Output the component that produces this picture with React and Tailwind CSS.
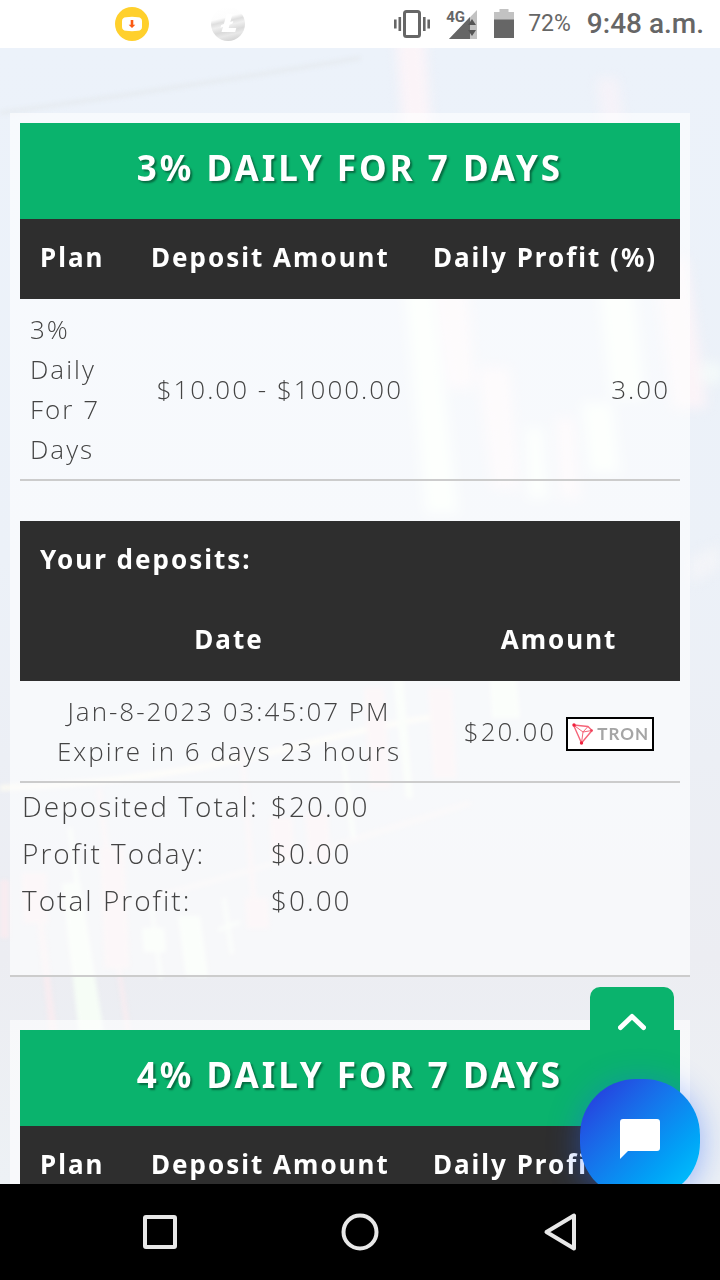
function Backdrop() {
  return (
    <svg
      className="absolute inset-0 h-full w-full"
      viewBox="0 0 720 1136"
      preserveAspectRatio="xMidYMin slice"
      aria-hidden="true"
    >
      <defs>
        <linearGradient id="sky" x1="0" y1="0" x2="0" y2="1">
          <stop offset="0" stopColor="#ecf2fa" />
          <stop offset="0.45" stopColor="#ecf1f8" />
          <stop offset="0.8" stopColor="#ecedf2" />
          <stop offset="1" stopColor="#edf1f5" />
        </linearGradient>
        <filter id="far" colorInterpolationFilters="sRGB">
          <feGaussianBlur stdDeviation="6" />
        </filter>
        <filter id="near" colorInterpolationFilters="sRGB">
          <feGaussianBlur stdDeviation="2" />
        </filter>
      </defs>
      <rect width="720" height="1136" fill="url(#sky)" />
      <path d="M0 65 Q180 40 360 10" stroke="#e6ebf0" strokeWidth="4" fill="none" filter="url(#near)" />

      {/* blurred candles, top right */}
      <g filter="url(#far)">
        <g fill="#fbf4f8">
          <path d="M395 -20h29l13 180h-28z" />
          <path d="M596 30h22l8 60h-22z" opacity="0.6" />
          <path d="M430 200h34l10 140h-26z" />
          <path d="M479 320h30l10 120h-26z" />
          <path d="M655 210h32l20 150h-34z" />
          <path d="M556 370h18l6 80h-20z" />
        </g>
        <g fill="#f9fffa">
          <path d="M402 215h28l28 250h-32z" />
          <path d="M595 200h34l16 150h-34z" />
          <path d="M582 355h30l8 70h-30z" />
          <path d="M526 380h16l6 70h-20z" />
          <circle cx="712" cy="325" r="12" opacity="0.6" />
        </g>
        <path d="M690 510l30-14v24l-30 16z" fill="#f3f4f8" />
      </g>

      {/* moving averages and sharper candles, bottom left */}
      <g filter="url(#near)">
        <path d="M0 740 Q150 735 290 700 T440 670" stroke="#fbfaf2" strokeWidth="6" fill="none" />
        <path d="M150 850 Q300 810 470 755" stroke="#f6f0f2" strokeWidth="4" fill="none" />
        <g fill="#f8ecf0">
          <path d="M0 832h9v58h-9z" />
          <path d="M22 825h24l2 50h-24z" />
          <path d="M38 875h5l16 125h-8z" />
          <path d="M100 800h24l5 120h-24z" />
          <path d="M97 740h4l10 80h-5z" />
          <path d="M116 915h4l13 85h-5z" />
          <path d="M245 850h22l2 30h-22z" />
          <path d="M240 700h4l12 150h-5z" />
          <path d="M270 770h22l2 40h-22z" />
          <path d="M305 765h22l4 50h-22z" />
          <path d="M364 640h20l6 100h-20z" />
          <path d="M428 640h24l4 90h-22z" />
        </g>
        <g fill="#f6fdf6">
          <path d="M62 835h18l24 150h-25z" />
          <path d="M68 780h4l8 60h-5z" />
          <path d="M142 880h22l2 24h-22z" />
          <path d="M150 860h3l10 70h-4z" />
          <path d="M178 868h22l8 60h-22z" />
          <path d="M222 850h4l8 56h-4z" />
          <path d="M218 880l22-8v4l-22 8z" />
          <path d="M340 700h4l12 90h-5z" />
          <path d="M393 630h10l10 120h-7z" />
          <path d="M490 630h26l4 40h-28z" />
        </g>
      </g>
    </svg>
  );
}

function StatusBar() {
  return (
    <header className="flex h-12 shrink-0 items-center justify-between bg-white pr-4 pl-[115px] font-['Roboto',sans-serif] text-[#666]">
      <div className="flex items-center gap-[62px]">
        <svg className="h-[34px] w-[34px]" viewBox="0 0 34 34">
          <circle cx="17" cy="17" r="17" fill="#ffd02c" />
          <path d="M11 10.2q6-.8 12 0 4 .3 4 4v5.600q0 3.700-4 4-6 .8-12 0-4-.3-4-4v-5.600q0-3.700 4-4z" fill="#fff" />
          <path d="M15.700 13h2.600v4.800h2L17 21l-3.300-3.200h2z" fill="#fb5a12" />
        </svg>
        <svg className="h-[34px] w-[34px]" viewBox="0 0 34 34">
          <defs>
            <linearGradient id="silver" x1="0.35" y1="0" x2="0.6" y2="1">
              <stop offset="0" stopColor="#fff" />
              <stop offset="0.3" stopColor="#fdfdfd" />
              <stop offset="0.42" stopColor="#dedede" />
              <stop offset="0.54" stopColor="#efefef" />
              <stop offset="0.7" stopColor="#dadada" />
              <stop offset="0.82" stopColor="#e8e8e8" />
              <stop offset="1" stopColor="#d2d2d2" />
            </linearGradient>
          </defs>
          <circle cx="17" cy="17" r="17" fill="url(#silver)" />
          <path d="M15.500 7h6l-2.200 8 3-1.100-.7 2.700-3 1.200-.9 3.200h7.600L24.200 25H10.500l1.600-5.200-2.700 1 .8-2.700 2.700-1z" fill="#fff" />
        </svg>
      </div>

      <div className="flex items-center">
        <svg className="mr-4 h-7 w-9" viewBox="0 0 36 28" fill="#666">
          <rect x="10.500" y="1.500" width="15" height="25" rx="2" fill="none" stroke="#666" strokeWidth="3" />
          <path d="M0 9.500h2.600v9H0zM4.500 7h2.600v14H4.500zM29 7h2.600v14H29zM33.400 9.500H36v9h-2.600z" />
        </svg>
        <div className="relative mr-4 h-[30px] w-8">
          <svg className="h-full w-full" viewBox="0 0 32 30">
            <path d="M31 1v29H3z" fill="#c2c2c2" />
            <path d="M24 8v22H3z" fill="#666" />
            <path d="M26 10l4 6h-8zM26 27l4-6h-8z" fill="#555" />
          </svg>
          <span className="absolute top-0 left-0 text-[15px] leading-4 font-bold">4G</span>
        </div>
        <svg className="mr-[14px] h-[30px] w-5" viewBox="0 0 20 30">
          <path d="M5.500 0h9v3H20v9H0V3h5.500z" fill="#c2c2c2" />
          <path d="M0 10.500h20V29H0z" fill="#666" />
        </svg>
        <span className="mr-4 text-[23px]">72%</span>
        <span className="text-[28px] leading-8 font-medium">9:48 a.m.</span>
      </div>
    </header>
  );
}

function TronBadge() {
  return (
    <span className="flex h-[34px] w-[88px] items-center gap-1 border-2 border-black bg-white pl-1">
      <svg className="h-[22px] w-[21px]" viewBox="0 0 21 22" fill="none" stroke="#f56478" strokeLinejoin="round">
        <path d="M1.500 2L16 3.500l4 4L9.500 20z" strokeWidth="1.400" />
        <path d="M1.500 2L11 9l5-5.500M11 9l9-1.500M11 9L9.500 20" strokeWidth="1" />
        <circle cx="2" cy="2" r="1.700" fill="#f0203c" stroke="none" />
        <circle cx="9.500" cy="20" r="1.700" fill="#f0203c" stroke="none" />
        <circle cx="19.500" cy="7.500" r="1.300" fill="#f0405a" stroke="none" />
      </svg>
      <span className="font-['Lato',sans-serif] text-[17px] leading-5 font-bold tracking-[1px] text-[#a5a5a5]">TRON</span>
    </span>
  );
}

const heading = "bg-[#2e2e2e] font-['Noto_Sans',sans-serif] text-[26px] text-white";

function PlanTable({ title, rows = [] }) {
  return (
    <table className="w-full table-fixed">
      <colgroup>
        <col className="w-[111px]" />
        <col />
        <col className="w-[267px]" />
      </colgroup>
      <thead>
        <tr className="bg-[#0ab36d] font-['Noto_Sans',sans-serif] text-[35px] tracking-[3px] text-white">
          <th colSpan={3} className="h-24 pb-[6px] font-bold [text-shadow:2px_2px_2px_rgba(0,0,0,0.4)]">
            {title}
          </th>
        </tr>
        <tr className={heading}>
          <th className="h-20 pb-1 pl-5 text-left font-bold">Plan</th>
          <th className="pb-1 pl-5 text-left font-bold">Deposit Amount</th>
          <th className="pb-1 pl-5 text-left font-bold whitespace-nowrap">Daily Profit (%)</th>
        </tr>
      </thead>
      <tbody>
        {rows.map((row) => (
          <tr key={row.plan} className="border-b-2 border-[#ccc]">
            <td className="p-[10px]">{row.plan}</td>
            <td className="p-[10px] text-right whitespace-nowrap">{row.amount}</td>
            <td className="p-[10px] text-right">{row.profit}</td>
          </tr>
        ))}
      </tbody>
    </table>
  );
}

function Deposits() {
  return (
    <table className="mt-10 w-full table-fixed text-center">
      <colgroup>
        <col />
        <col className="w-[242px]" />
      </colgroup>
      <thead className={heading}>
        <tr>
          <th colSpan={2} className="h-20 pb-1 pl-5 text-left font-bold">Your deposits:</th>
        </tr>
        <tr>
          <th className="h-20 pb-1 font-bold">Date</th>
          <th className="pb-1 font-bold">Amount</th>
        </tr>
      </thead>
      <tbody>
        <tr className="border-b-2 border-[#ccc]">
          <td className="py-[10px]">
            Jan-8-2023 03:45:07 PM
            <br />
            Expire in 6 days 23 hours
          </td>
          <td className="py-[10px]">
            <div className="flex items-end justify-center gap-[10px]">
              $20.00 <TronBadge />
            </div>
          </td>
        </tr>
      </tbody>
    </table>
  );
}

const totals = [
  ["Deposited Total:", "$20.00"],
  ["Profit Today:", "$0.00"],
  ["Total Profit:", "$0.00"],
];

export default function App() {
  return (
    <div className="flex h-screen flex-col overflow-hidden">
      <StatusBar />

      <main className="relative flex-1 overflow-hidden font-['Open_Sans',sans-serif] text-[26px] leading-10 font-light tracking-[2px] text-[#444]">
        <Backdrop />

        <div className="relative flex flex-col gap-[43px] pt-[65px] pr-[30px] pl-[10px]">
          <section className="border-b-2 border-[#ccc] bg-white/60 px-[10px] pt-[10px] pb-[51px]">
            <PlanTable
              title="3% DAILY FOR 7 DAYS"
              rows={[{ plan: "3% Daily For 7 Days", amount: "$10.00 - $1000.00", profit: "3.00" }]}
            />
            <Deposits />
            <table className="text-[28px] leading-[47px]">
              <tbody>
                {totals.map(([label, value]) => (
                  <tr key={label}>
                    <td className="w-[251px] pl-[2px]">{label}</td>
                    <td>{value}</td>
                  </tr>
                ))}
              </tbody>
            </table>
          </section>

          <section className="bg-white/60 px-[10px] pt-[10px]">
            <PlanTable title="4% DAILY FOR 7 DAYS" />
          </section>
        </div>

        <button
          aria-label="Back to top"
          className="absolute right-[46px] bottom-[113px] flex h-[84px] w-[84px] justify-center rounded-[10px] bg-[#0ab36d] pt-[26px]"
        >
          <svg className="h-[18px] w-7" viewBox="0 0 28 18" fill="none" stroke="#fff" strokeWidth="5" strokeLinecap="round" strokeLinejoin="round">
            <path d="M2.500 14.500L14 3.500l11.500 11" />
          </svg>
        </button>

        <button
          aria-label="Open chat"
          className="absolute right-5 -bottom-[15px] flex h-[120px] w-[120px] items-center justify-center rounded-[56px] bg-linear-to-br from-[#2a27da] to-[#00ccff] shadow-[0_4px_32px_rgba(35,100,255,0.45)]"
        >
          <svg className="h-10 w-10" viewBox="0 0 40 40" fill="#fff">
            <path d="M3 0h34q3 0 3 3v26q0 3-3 3H8l-8 8V3q0-3 3-3z" />
          </svg>
        </button>
      </main>

      <nav className="flex h-24 shrink-0 items-center justify-around bg-black px-[60px]">
        <button aria-label="Recent apps">
          <svg className="h-10 w-10" viewBox="0 0 40 40" fill="none" stroke="#e8e8e8" strokeWidth="4">
            <rect x="5" y="5" width="30" height="30" rx="1" />
          </svg>
        </button>
        <button aria-label="Home">
          <svg className="h-10 w-10" viewBox="0 0 40 40" fill="none" stroke="#e8e8e8" strokeWidth="4">
            <circle cx="20" cy="20" r="16.500" />
          </svg>
        </button>
        <button aria-label="Back">
          <svg className="h-10 w-10" viewBox="0 0 40 40" fill="none" stroke="#e8e8e8" strokeWidth="4" strokeLinejoin="round">
            <path d="M34 3.500v33L6.500 20z" />
          </svg>
        </button>
      </nav>
    </div>
  );
}
